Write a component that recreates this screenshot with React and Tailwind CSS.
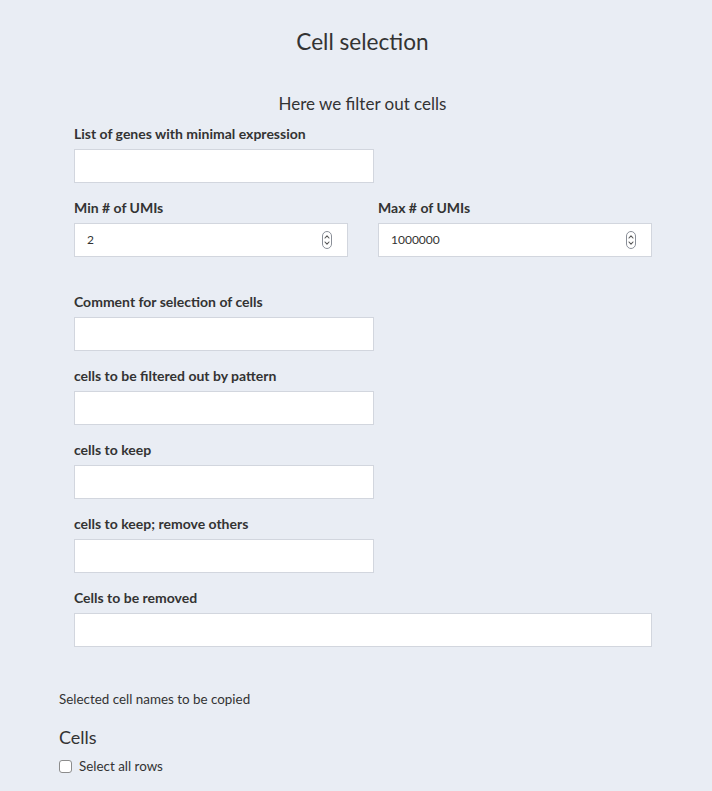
import React from "react";

const font = { fontFamily: "Lato, 'Liberation Sans', sans-serif" };

function Spinner() {
  return (
    <svg
      className="absolute right-[15px] top-[7px]"
      width="10"
      height="18"
      viewBox="0 0 10 18"
      fill="none"
    >
      <rect x="0.5" y="0.5" width="9" height="17" rx="4.5" stroke="#8a8f98" strokeWidth="1" fill="#fff" />
      <path d="M3 7 L5 4.8 L7 7" stroke="#555" strokeWidth="1.1" strokeLinecap="round" strokeLinejoin="round" />
      <path d="M3 11 L5 13.2 L7 11" stroke="#555" strokeWidth="1.1" strokeLinecap="round" strokeLinejoin="round" />
    </svg>
  );
}

function Field({ label, width = "w-[300px]", value, number }) {
  return (
    <div className="mb-[15px]">
      <div className="h-[20px] mb-[5px] text-[14px] leading-[20px] font-bold text-[#333]">{label}</div>
      <div className={`relative h-[34px] ${width} bg-white border border-[#d2d6de]`}>
        {value !== undefined && (
          <div className="pl-[12px] text-[12px] leading-[32px] text-[#333]">{value}</div>
        )}
        {number && <Spinner />}
      </div>
    </div>
  );
}

export default function App() {
  return (
    <div className="min-h-[791px] bg-[#e9edf4] text-[#333]" style={font}>
      <div className="pl-[59px] pr-[46px] pt-[29px]">
        <h1 className="text-center text-[22.6px] leading-[26px] font-normal text-[#333]">Cell selection</h1>
        <h3 className="mt-[39px] text-center text-[17px] leading-[20px] font-normal text-[#333]">
          Here we filter out cells
        </h3>
        <div className="mt-[10px] pl-[15px] w-[593px]">
          <Field label="List of genes with minimal expression" />
          <div className="flex gap-[30px]">
            <div className="w-[274px]">
              <Field label="Min # of UMIs" width="w-[274px]" value="2" number />
            </div>
            <div className="w-[274px]">
              <Field label="Max # of UMIs" width="w-[274px]" value="1000000" number />
            </div>
          </div>
          <div className="h-[20px]" />
          <Field label="Comment for selection of cells" />
          <Field label="cells to be filtered out by pattern" />
          <Field label="cells to keep" />
          <Field label="cells to keep; remove others" />
          <Field label="Cells to be removed" width="w-[578px]" />
        </div>
        <div className="mt-[42px] text-[13.4px] leading-[20px]">Selected cell names to be copied</div>
        <div className="mt-[18px] text-[18px] leading-[20px]">Cells</div>
        <div className="mt-[9px] flex items-center h-[20px]">
          <div className="w-[13px] h-[13px] rounded-[3px] border border-[#8c8c8c] bg-white" />
          <span className="ml-[7px] text-[13.4px] leading-[20px]">Select all rows</span>
        </div>
      </div>
    </div>
  );
}
